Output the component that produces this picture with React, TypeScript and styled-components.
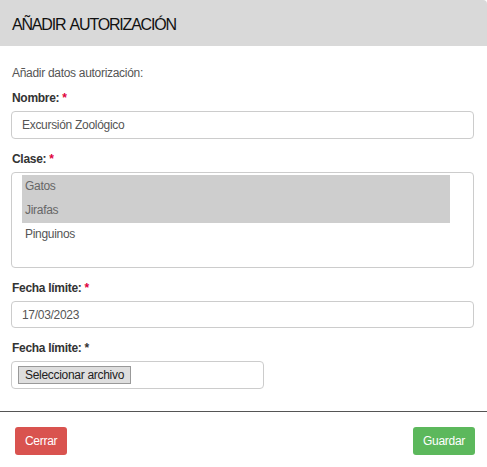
import styled, { createGlobalStyle } from "styled-components";

const GlobalStyle = createGlobalStyle`
  html, body {
    margin: 0;
    padding: 0;
    background: #fff;
  }
  body {
    font-family: "Liberation Sans", Arial, sans-serif;
    letter-spacing: -0.3px;
  }
`;

const clases = [
  { name: "Gatos", selected: true },
  { name: "Jirafas", selected: true },
  { name: "Pinguinos", selected: false },
];

function App() {
  return (
    <>
      <GlobalStyle />
      <Modal>
        <Header>
          <Title>AÑADIR AUTORIZACIÓN</Title>
        </Header>
        <Body>
          <Intro>Añadir datos autorización:</Intro>
          <Field>
            <Label>
              Nombre: <Star $required>*</Star>
            </Label>
            <TextBox>Excursión Zoológico</TextBox>
          </Field>
          <Field>
            <Label>
              Clase: <Star $required>*</Star>
            </Label>
            <ListBox>
              {clases.map((c) => (
                <Option key={c.name} $selected={c.selected}>
                  {c.name}
                </Option>
              ))}
            </ListBox>
          </Field>
          <Field>
            <Label>
              Fecha límite: <Star $required>*</Star>
            </Label>
            <TextBox $short>17/03/2023</TextBox>
          </Field>
          <Field>
            <Label>
              Fecha límite: <Star>*</Star>
            </Label>
            <FileBox>
              <FileButton type="button">Seleccionar archivo</FileButton>
            </FileBox>
          </Field>
        </Body>
        <Footer>
          <Button $variant="danger">Cerrar</Button>
          <Button $variant="success">Guardar</Button>
        </Footer>
      </Modal>
    </>
  );
}

export default App;

const Modal = styled.div`
  width: 487px;
  height: 467px;
  background: #fff;
  display: flex;
  flex-direction: column;
`;

const Header = styled.div`
  height: 46px;
  background: #d9d9d9;
  border-top-right-radius: 4px;
  display: flex;
  align-items: center;
  padding: 0 12px;
  box-sizing: border-box;
`;

const Title = styled.h4`
  margin: 0;
  font-size: 16px;
  font-weight: normal;
  letter-spacing: -1.2px;
  word-spacing: 2px;
  color: #111;
  padding-top: 4px;
`;

const Body = styled.div`
  padding: 20px 13px 0 11px;
  display: flex;
  flex-direction: column;
  gap: 13px;
  height: 366px;
  box-sizing: border-box;
  border-bottom: 1px solid #555;
`;

const Intro = styled.p`
  margin: 0 0 -2px 1px;
  font-size: 12px;
  color: #555;
  line-height: 14px;
`;

const Field = styled.div`
  display: flex;
  flex-direction: column;
  gap: 6px;
`;

const Label = styled.label`
  margin-left: 1px;
  font-size: 12px;
  font-weight: bold;
  color: #333;
  line-height: 14px;
`;

const Star = styled.span<{ $required?: boolean }>`
  color: ${({ $required }) => ($required ? "#e0003c" : "#333")};
`;

const TextBox = styled.div<{ $short?: boolean }>`
  height: ${({ $short }) => ($short ? "27px" : "28px")};
  box-sizing: border-box;
  border: 1px solid #ccc;
  border-radius: 4px;
  padding: 0 10px;
  display: flex;
  align-items: center;
  font-size: 12px;
  color: #555;
`;

const ListBox = styled.div`
  height: 96px;
  box-sizing: border-box;
  border: 1px solid #ccc;
  border-radius: 4px;
  padding: 2px 23px 0 10px;
`;

const Option = styled.div<{ $selected: boolean }>`
  height: 24px;
  line-height: 22px;
  padding: 0 3px;
  font-size: 12px;
  color: ${({ $selected }) => ($selected ? "#666" : "#555")};
  background: ${({ $selected }) => ($selected ? "#cecece" : "transparent")};
`;

const FileBox = styled.div`
  width: 253px;
  height: 28px;
  box-sizing: border-box;
  border: 1px solid #ccc;
  border-radius: 4px;
  padding: 0 6px;
  display: flex;
  align-items: center;
`;

const FileButton = styled.button`
  height: 18px;
  padding: 0 6px;
  box-sizing: border-box;
  border: 1px solid #999;
  background: #dedede;
  font-family: "Liberation Sans", Arial, sans-serif;
  font-size: 12px;
  letter-spacing: -0.3px;
  color: #222;
  white-space: nowrap;
`;

const Footer = styled.div`
  flex: 1;
  display: flex;
  justify-content: space-between;
  align-items: flex-start;
  padding: 15px 12px 0 15px;
`;

const Button = styled.button<{ $variant: "danger" | "success" }>`
  height: 28px;
  padding: 0 10px;
  border: none;
  border-radius: 3px;
  background: ${({ $variant }) => ($variant === "danger" ? "#d9534f" : "#5cb85c")};
  color: #fff;
  font-family: "Liberation Sans", Arial, sans-serif;
  font-size: 12px;
  letter-spacing: -0.3px;
`;
